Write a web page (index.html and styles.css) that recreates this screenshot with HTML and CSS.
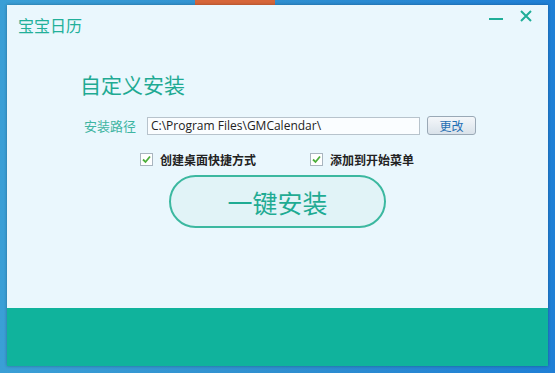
FILE: index.html
```html
<!DOCTYPE html>
<html>
<head>
    <title>宝宝日历 安装</title>
    <link rel="stylesheet" href="styles.css">
</head>
<body>
    <div class="desktop">
        <div class="window">
            <div class="titlebar">
                <span class="app-name">宝宝日历</span>
                <div class="controls">
                    <span class="min"></span>
                    <svg class="close" width="12" height="12" viewBox="0 0 12 12">
                        <path d="M1 1 L11 11 M11 1 L1 11" stroke="#1fae98" stroke-width="2" fill="none"/>
                    </svg>
                </div>
            </div>
            <div class="content">
                <h2 class="heading">自定义安装</h2>
                <div class="path-row">
                    <span class="path-label">安装路径</span>
                    <input type="text" class="path-input" value="C:\Program Files\GMCalendar\">
                    <button class="change-btn">更改</button>
                </div>
                <div class="check-row">
                    <label class="check">
                        <svg class="box" width="13" height="13" viewBox="0 0 13 13">
                            <rect x="0.5" y="0.5" width="12" height="12" fill="#fff" stroke="#a9b5bf"/>
                            <path d="M3 6.5 L5.5 9 L10 3.5" stroke="#4caf3a" stroke-width="1.8" fill="none"/>
                        </svg>创建桌面快捷方式</label>
                    <label class="check">
                        <svg class="box" width="13" height="13" viewBox="0 0 13 13">
                            <rect x="0.5" y="0.5" width="12" height="12" fill="#fff" stroke="#a9b5bf"/>
                            <path d="M3 6.5 L5.5 9 L10 3.5" stroke="#4caf3a" stroke-width="1.8" fill="none"/>
                        </svg>添加到开始菜单</label>
                </div>
                <button class="install-btn">一键安装</button>
            </div>
            <div class="footer"></div>
        </div>
    </div>
</body>
</html>
```

FILE: styles.css
```css
body {
    margin: 0;
    font-family: "Noto Sans CJK SC", "Liberation Sans", sans-serif;
}
.desktop {
    width: 555px;
    height: 373px;
    background: linear-gradient(90deg, #3a9fd6 0%, #2f8fd0 50%, #1f7fd6 100%);
    padding: 5px 7px 7px 7px;
    box-sizing: border-box;
    position: relative;
    overflow: hidden;
}
.desktop::before {
    content: "";
    position: absolute;
    left: 195px;
    top: 0;
    width: 80px;
    height: 5px;
    background: #d6663a;
}
.window {
    width: 541px;
    height: 361px;
    background: #eaf7fd;
    display: flex;
    flex-direction: column;
    box-shadow: 0 0 3px rgba(0,0,0,0.3);
    position: relative;
}
.titlebar {
    height: 34px;
    display: flex;
    justify-content: space-between;
    align-items: flex-start;
    padding: 0 16px 0 11px;
}
.app-name {
    color: #22b09a;
    font-size: 16px;
    margin-top: 8px;
}
.controls {
    display: flex;
    align-items: center;
    gap: 17px;
    margin-top: 5px;
}
.min {
    width: 14px;
    height: 2px;
    background: #1fae98;
    margin-top: 5px;
}
.close {
    display: block;
}
.content {
    flex: 1;
    padding-left: 73px;
}
.heading {
    margin: 30px 0 0 0;
    font-size: 21px;
    font-weight: normal;
    color: #1faa93;
    line-height: 30px;
}
.path-row {
    display: flex;
    align-items: center;
    margin-top: 17px;
}
.path-label {
    color: #3fb5a2;
    font-size: 13px;
    margin-left: 4px;
    width: 63px;
}
.path-input {
    width: 273px;
    height: 18px;
    box-sizing: border-box;
    border: 1px solid #b7c3cc;
    background: #fafdff;
    font-family: "Open Sans", "Liberation Sans", sans-serif;
    font-size: 12px;
    color: #222;
    padding: 0 3px;
    outline: none;
}
.change-btn {
    margin-left: 7px;
    width: 49px;
    height: 19px;
    border: 1px solid #9aa9b6;
    border-radius: 3px;
    background: linear-gradient(#f4f7fa, #d9e2ea);
    color: #1f6fb3;
    font-family: "Noto Sans CJK SC", sans-serif;
    font-size: 12px;
    padding: 0;
    line-height: 17px;
}
.check-row {
    display: flex;
    margin-top: 16px;
    margin-left: 60px;
}
.check {
    display: flex;
    align-items: center;
    font-size: 12px;
    font-weight: bold;
    color: #222;
    width: 170px;
}
.box {
    display: block;
    margin-right: 7px;
}
.install-btn {
    display: block;
    margin: 7px 0 0 89px;
    width: 217px;
    height: 53px;
    border: 2px solid #3cb8a0;
    border-radius: 27px;
    background: #e1f3f7;
    color: #1fab93;
    font-family: "Noto Sans CJK SC", sans-serif;
    font-size: 25px;
    padding: 0;
}
.footer {
    height: 58px;
    background: #10b39c;
}
```
